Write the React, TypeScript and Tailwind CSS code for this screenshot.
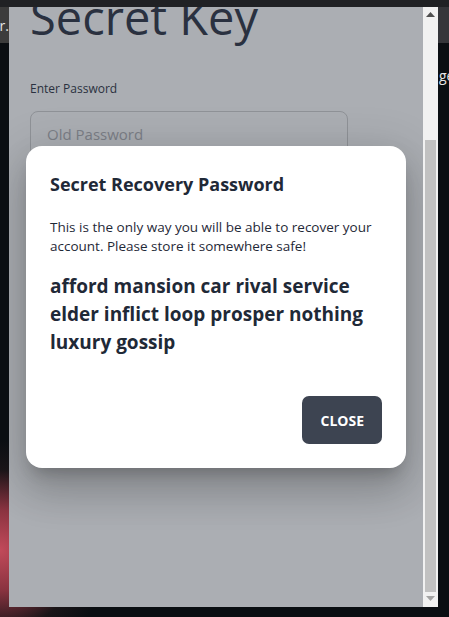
import React from "react";

const font = { fontFamily: '"Open Sans", "Noto Sans", sans-serif' };

function Scrollbar() {
  return (
    <div className="w-[15px] h-[600px] bg-[#f1f1f1] flex flex-col shrink-0">
      <div className="h-[15px] flex items-center justify-center">
        <svg width="9" height="5" viewBox="0 0 9 5">
          <polygon points="4.5,0 9,5 0,5" fill="#505050" />
        </svg>
      </div>
      <div className="h-[570px] flex flex-col px-[2px] pt-[118px]">
        <div className="h-[452px] bg-[#c1c1c1]" />
      </div>
      <div className="h-[15px] flex items-start justify-center pt-[4px]">
        <svg width="9" height="5" viewBox="0 0 9 5">
          <polygon points="0,0 9,0 4.5,5" fill="#a3a3a3" />
        </svg>
      </div>
    </div>
  );
}

export default function App() {
  return (
    <div
      className="w-[449px] h-[617px] overflow-hidden flex flex-col bg-[radial-gradient(circle_at_0px_550px,#c24a5a_0px,#8a3340_40px,#1a1518_80px,#0a0e12_110px)]"
      style={font}
    >
      <div className="h-[7px] bg-[#202124] shrink-0" />
      <div className="flex h-[600px] shrink-0">
        <div className="w-[9px] flex flex-col shrink-0">
          <div className="h-[36px] bg-[#3c3c3c] overflow-hidden flex items-center justify-end">
            <span className="text-[14px] text-[#e6e6e6] whitespace-nowrap">r.</span>
          </div>
        </div>
        <div className="w-[414px] h-[600px] relative overflow-hidden bg-[#abaeb3] shrink-0">
          <div className="pl-[21px] pr-[75px]">
            <h1 className="text-[47px] leading-[47px] -mt-[13px] text-[#2a3140] font-normal">
              Secret Key
            </h1>
            <div className="mt-[40px] text-[12px] leading-[16px] text-[#2a3140]">
              Enter Password
            </div>
            <div className="mt-[14px] h-[56px] rounded-[8px] border border-[#8f9297] px-[16px] pt-[11px] text-[15px] leading-[22px] text-[#7b7f87]">
              Old Password
            </div>
          </div>
          <div className="absolute left-[17px] top-[139px] w-[380px] bg-white rounded-[16px] p-[24px] shadow-[0_11px_15px_-7px_rgba(0,0,0,0.2),0_24px_38px_3px_rgba(0,0,0,0.14),0_9px_46px_8px_rgba(0,0,0,0.12)]">
            <h2 className="text-[18px] leading-[28px] font-bold text-[#1f2937]">
              Secret Recovery Password
            </h2>
            <p className="mt-[20px] text-[13.5px] leading-[19px] text-[#1f2937]">
              This is the only way you will be able to recover your account. Please store it somewhere safe!
            </p>
            <p className="mt-[16px] text-[19px] leading-[28px] font-bold text-[#1f2937]">
              afford mansion car rival service elder inflict loop prosper nothing luxury gossip
            </p>
            <div className="mt-[40px] flex justify-end">
              <button className="h-[48px] px-[18px] rounded-[7px] bg-[#3d4451] text-white text-[14px] font-bold uppercase">
                Close
              </button>
            </div>
          </div>
        </div>
        <Scrollbar />
        <div className="w-[11px] flex flex-col shrink-0">
          <div className="h-[36px] bg-[#35363a]" />
          <div className="mt-[22px] overflow-hidden whitespace-nowrap text-[14px] text-[#e6e6e6] pl-[1px]">ge</div>
        </div>
      </div>
      <div className="h-[10px] shrink-0" />
    </div>
  );
}
